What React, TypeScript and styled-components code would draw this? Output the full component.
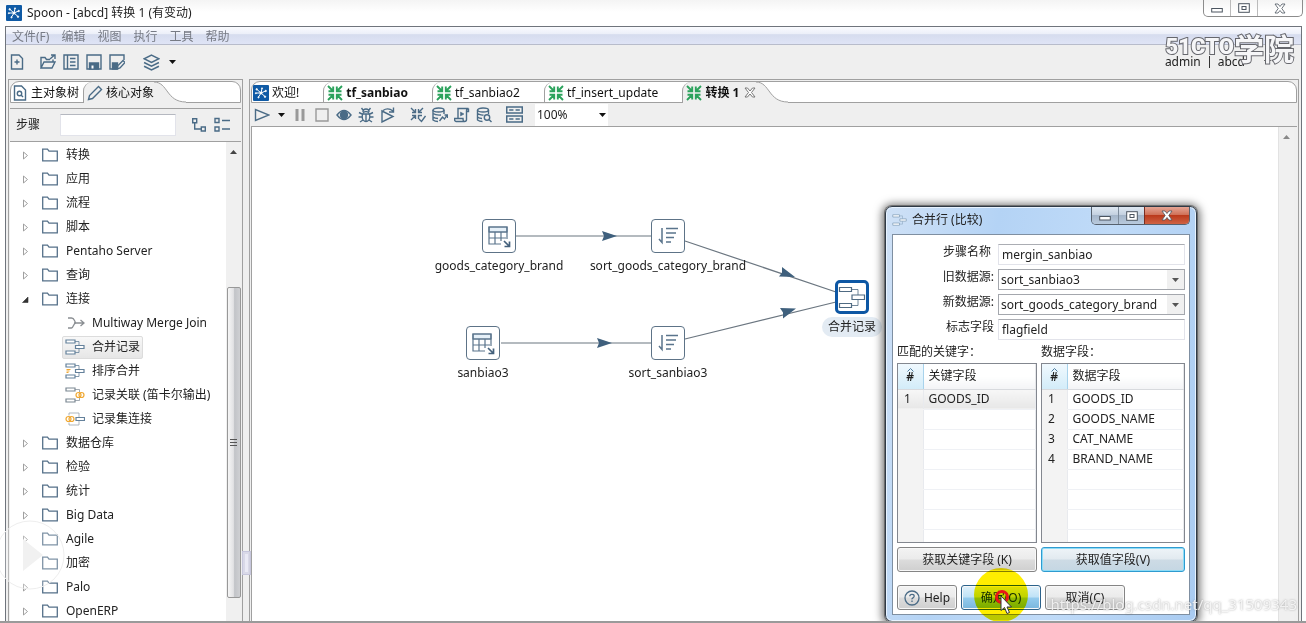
import React from "react";
import styled, { createGlobalStyle, css } from "styled-components";

const ink = "#4a6b86";
const line = "#a0a0a0";
const face = "#efefef";
const fonts = `"Noto Sans", "Noto Sans CJK SC", sans-serif`;

const Global = createGlobalStyle`
  * { box-sizing: border-box; }
  body { margin: 0; font-family: ${fonts}; font-size: 12px; line-height: 16px; color: #222; }
  button, input, select { font: inherit; color: inherit; margin: 0; }
  button { border: 0; padding: 0; background: none; }
`;

/* ---------- window frame ---------- */
const Page = styled.div`
  position: relative;
  display: flex;
  flex-direction: column;
  height: 100vh;
  min-height: 420px;
  overflow: hidden;
  background: linear-gradient(#f4f4f4, #fff 12px);
  border-bottom: 2px solid #9a9a9a;
`;
const TitleBar = styled.header`
  display: flex;
  justify-content: space-between;
  height: 26px;
  padding: 0 3px 0 6px;
`;
const Title = styled.h1`
  display: flex;
  align-items: center;
  gap: 5px;
  margin: 0;
  font-size: 12px;
  font-weight: 400;
`;
const WindowButtons = styled.div`
  display: flex;
  height: 17px;
  border: 1px solid #8c8c8c;
  border-top: 0;
  border-radius: 0 0 5px 5px;
`;
const WindowButton = styled.button<{ $w: number }>`
  display: flex;
  align-items: center;
  justify-content: center;
  width: ${(p) => p.$w}px;
  & + & { border-left: 1px solid #bbb; }
`;
const Frame = styled.div`
  flex: 1;
  min-height: 0;
  display: flex;
  flex-direction: column;
  margin: 0 4px 0 5px;
  border: 1px solid #6f747c;
  border-bottom: 0;
  background: ${face};
`;
const MenuBar = styled.nav`
  display: flex;
  gap: 12px;
  height: 18px;
  padding: 2px 0 0 6px;
  background: linear-gradient(#fafbfe, #eceff9 40%, #d6dcee 45%, #dfe4f6);
  border-bottom: 1px solid #b8bccb;
  color: #777b85;
`;
const ToolBar = styled.div`
  display: flex;
  align-items: center;
  height: 34px;
  padding-right: 30px;
`;
const Tool = styled.button<{ $w?: number; $gap?: number }>`
  display: flex;
  align-items: center;
  justify-content: center;
  width: ${(p) => p.$w ?? 23}px;
  height: 22px;
  margin-left: ${(p) => p.$gap ?? 0}px;
  color: ${ink};
`;
const Account = styled.button`
  display: flex;
  align-items: center;
  gap: 8px;
  margin-left: auto;
  color: #222;
`;
const Repository = styled.span`
  padding-right: 11px;
`;
const Rule = styled.span`
  width: 1px;
  height: 12px;
  background: #333;
`;
const Body = styled.main`
  flex: 1;
  min-height: 0;
  display: grid;
  grid-template-columns: 235px 1fr;
  gap: 6px;
  padding: 0 2px;
`;
const Panel = styled.section`
  min-width: 0;
  min-height: 0;
  display: flex;
  flex-direction: column;
  border: 1px solid ${line};
  border-bottom: 0;
  padding: 1px 1px 0;
`;
const TabStrip = styled.div`
  display: flex;
  height: 22px;
  background: #fff;
  border: 1px solid ${line};
  border-radius: 9px 9px 0 0;
`;
const Tab = styled.button<{ $active?: boolean; $bold?: boolean; $end?: number; $first?: boolean }>`
  display: flex;
  align-items: center;
  gap: 3px;
  height: 21px;
  padding: 0 ${(p) => p.$end ?? 24}px 0 ${(p) => (p.$first ? 1 : 3)}px;
  white-space: nowrap;
  font-weight: ${(p) => (p.$bold ? 700 : 400)};
  color: #111;
  border-left: ${(p) => (p.$first ? 0 : 1)}px solid ${line};
  border-top-left-radius: 9px;
  ${(p) => p.$active && css`background: ${face};`}
`;
const TabSlope = styled.svg`
  flex: none;
  width: 32px;
  height: 21px;
`;
const SearchRow = styled.div`
  display: flex;
  align-items: center;
  height: 34px;
  margin-top: 5px;
  padding: 0 8px 0 6px;
  border-top: 1px solid ${line};
  border-bottom: 1px solid ${line};
`;
const SearchBox = styled.input`
  width: 116px;
  height: 22px;
  margin: 0 auto 0 20px;
  border: 1px solid #e2e3ea;
  border-top-color: #b5b8c0;
  background: #fff;
`;
const TreeArea = styled.div`
  flex: 1;
  min-height: 0;
  display: flex;
  background: #fff;
  overflow: hidden;
`;
const Tree = styled.ul`
  flex: 1;
  margin: 0;
  padding: 1px 0 0;
  list-style: none;
`;
const TreeRow = styled.li<{ $child?: boolean }>`
  display: flex;
  align-items: center;
  gap: ${(p) => (p.$child ? 0 : 12)}px;
  height: 24px;
  padding-left: ${(p) => (p.$child ? 52 : 10)}px;
`;
const Leaf = styled.span<{ $selected?: boolean }>`
  display: flex;
  align-items: center;
  gap: 7px;
  height: 23px;
  padding: 0 2px;
  white-space: nowrap;
  border: 1px solid ${(p) => (p.$selected ? "#dcdcdc" : "transparent")};
  border-radius: 2px;
  ${(p) => p.$selected && css`background: linear-gradient(#f8f8f8, #e6e6e6);`}
`;
const FolderLabel = styled.span`
  display: flex;
  align-items: center;
  gap: 8px;
`;
const ScrollTrack = styled.div`
  display: flex;
  flex-direction: column;
  align-items: center;
  width: 15px;
  background: #f0f0f0;
`;
const ScrollUp = styled.span`
  display: flex;
  align-items: center;
  justify-content: center;
  height: 19px;
`;
const ScrollThumb = styled.div`
  display: flex;
  align-items: center;
  justify-content: center;
  width: 14px;
  height: 65%;
  margin-top: 126px;
  border: 1px solid #989898;
  border-radius: 2px;
  background: linear-gradient(90deg, #f6f6f6, #e2e2e4 45%, #c2c4c8 55%, #cfd0d3);
`;

/* ---------- editor ---------- */
const RunBar = styled.div`
  display: flex;
  align-items: center;
  height: 24px;
  border-bottom: 1px solid ${line};
`;
const ZoomBox = styled.label`
  position: relative;
  display: flex;
  align-items: center;
  width: 73px;
  height: 22px;
  margin-left: 10px;
  background: #fff;
  svg { position: absolute; right: 2px; pointer-events: none; }
`;
const ZoomSelect = styled.select`
  appearance: none;
  width: 100%;
  height: 100%;
  border: 0;
  padding: 0 2px;
  background: transparent;
`;
const CanvasArea = styled.div`
  flex: 1;
  min-height: 0;
  display: flex;
  padding-right: 3px;
`;
const Canvas = styled.div`
  position: relative;
  flex: 1;
  overflow: hidden;
  background: #fff;
  border-left: 1px solid ${line};
`;
const CanvasScroll = styled.div`
  width: 16px;
  border-left: 1px solid #e2e2e2;
  background: #f0f0f0;
  text-align: center;
`;
const Hops = styled.svg`
  position: absolute;
  left: 0;
  top: 0;
  width: 640px;
  height: 300px;
`;
const Node = styled.div<{ $x: number; $y: number }>`
  position: absolute;
  left: ${(p) => p.$x}px;
  top: ${(p) => p.$y}px;
  width: 160px;
  margin-left: -80px;
  display: flex;
  flex-direction: column;
  align-items: center;
  gap: 3px;
`;
const NodeBox = styled.div<{ $selected?: boolean }>`
  display: flex;
  align-items: center;
  justify-content: center;
  width: 34px;
  height: 34px;
  background: #fff;
  border: ${(p) => (p.$selected ? "3px solid #0d57a4" : "1px solid #5d7387")};
  border-radius: ${(p) => (p.$selected ? 5 : 4)}px;
`;
const NodeLabel = styled.span<{ $selected?: boolean }>`
  padding: 2px 6px;
  border-radius: 12px;
  white-space: nowrap;
  background: ${(p) => (p.$selected ? "#e3ebf3" : "transparent")};
`;

/* ---------- dialog ---------- */
const Dialog = styled.section`
  position: absolute;
  right: 109px;
  top: 206px;
  width: 312px;
  padding: 0 6px 6px;
  border: 1px solid #2f3a46;
  border-radius: 7px;
  background: linear-gradient(100deg, #cfe1f6, #b4d3f5 30%, #c0dbf8 60%, #a9cbf1);
  box-shadow: 0 0 0 1px rgba(60, 60, 60, 0.5), inset 0 0 0 1px #e8f3ff, 0 1px 8px 3px rgba(0, 0, 0, 0.55);
`;
const DialogTitle = styled.header`
  display: flex;
  align-items: flex-start;
  height: 27px;
`;
const DialogName = styled.h2`
  display: flex;
  align-items: center;
  gap: 5px;
  flex: 1;
  height: 26px;
  margin: 0;
  font-size: 12px;
  font-weight: 400;
`;
const DialogButtons = styled.div`
  display: flex;
  height: 18px;
  border: 1px solid #56616e;
  border-top: 0;
  border-radius: 0 0 5px 5px;
  overflow: hidden;
`;
const CaptionButton = styled.button<{ $close?: boolean }>`
  display: flex;
  align-items: center;
  justify-content: center;
  width: ${(p) => (p.$close ? 45 : 26)}px;
  border-left: 1px solid ${(p) => (p.$close ? "#7a2d20" : "#7d8b9b")};
  &:first-child { border-left: 0; }
  background: ${(p) =>
    p.$close
      ? "linear-gradient(#e5a595, #d07259 45%, #bb3a1c 50%, #cf6344)"
      : "linear-gradient(#dfe8f2, #c4d1e0 45%, #a5b6ca 50%, #b9cadd)"};
`;
const DialogBody = styled.form`
  padding: 9px 4px 4px;
  background: #fff;
  border: 1px solid #7f8fa1;
`;
const Fields = styled.div`
  display: grid;
  grid-template-columns: 97px 1fr;
  grid-auto-rows: 21px;
  gap: 4px;
`;
const FieldLabel = styled.label<{ $tight?: boolean }>`
  text-align: right;
  padding-right: ${(p) => (p.$tight ? 0 : 3)}px;
  white-space: nowrap;
`;
const TextField = styled.input`
  width: 100%;
  height: 21px;
  padding: 0 3px;
  border: 1px solid #e2e3ea;
  border-top-color: #abadb3;
  background: #fff;
`;
const PickWrap = styled.div`
  display: flex;
  position: relative;
  svg { position: absolute; right: 1px; top: 1px; pointer-events: none; }
`;
const Pick = styled.select`
  appearance: none;
  width: 100%;
  height: 21px;
  padding: 0 2px;
  border: 1px solid #a4a7ad;
  border-radius: 0;
  background: #fff;
`;
const Columns = styled.div<{ $top?: number }>`
  display: grid;
  grid-template-columns: 140px 1fr;
  column-gap: 4px;
  margin-top: ${(p) => p.$top ?? 0}px;
`;
const Caption = styled.h3`
  height: 23px;
  margin: 0;
  padding-top: 4px;
  font-size: 12px;
  font-weight: 400;
`;
const GridBox = styled.div`
  height: 180px;
  overflow: hidden;
  border: 1px solid #83878f;
`;
const Grid = styled.table`
  width: 100%;
  border-collapse: collapse;
  table-layout: fixed;
`;
const HeadCell = styled.th<{ $index?: boolean }>`
  height: 25px;
  width: ${(p) => (p.$index ? "25px" : "auto")};
  padding: 0 0 0 ${(p) => (p.$index ? 0 : 5)}px;
  text-align: ${(p) => (p.$index ? "center" : "left")};
  font-weight: ${(p) => (p.$index ? 600 : 400)};
  background: ${(p) => (p.$index ? "linear-gradient(#f0f9fe, #d3ecf9)" : "linear-gradient(#fff 50%, #f3f4f6)")};
  border-right: 1px solid ${(p) => (p.$index ? "#a8d3ec" : "#e6e7ea")};
  border-bottom: 1px solid #d8dade;
`;
const SortMark = styled.svg`
  display: block;
  margin: 0 auto -3px;
`;
const Cell = styled.td<{ $index?: boolean; $on?: boolean }>`
  height: 20px;
  padding: 0 0 0 ${(p) => (p.$index ? 6 : 5)}px;
  white-space: nowrap;
  border-bottom: 1px solid ${(p) => (p.$index ? "#f3f3f3" : "#eff1f5")};
  border-right: 1px solid #e8eaee;
  background: ${(p) => (p.$on ? "linear-gradient(#f7f7f7, #e7e7e7)" : p.$index ? "#f3f3f3" : "#fff")};
`;
const PushButton = styled.button<{ $tone?: "focus" | "default"; $w?: number }>`
  display: flex;
  align-items: center;
  justify-content: center;
  gap: 4px;
  width: ${(p) => (p.$w ? `${p.$w}px` : "100%")};
  height: 25px;
  color: ${(p) => (p.$tone === "default" ? "#14307c" : "#222")};
  border: 1px solid ${(p) => (p.$tone === "focus" ? "#2f9bd0" : p.$tone === "default" ? "#2c628b" : "#858585")};
  border-radius: 3px;
  box-shadow: inset 0 0 0 1px ${(p) => (p.$tone === "focus" ? "#8ddcf7" : "#f8f8f8")};
  background: ${(p) =>
    p.$tone === "focus"
      ? "linear-gradient(#eef4f8, #e2eaf0 48%, #cddbe5 52%, #c5d7e3)"
      : p.$tone === "default"
      ? "linear-gradient(#dff1fb, #bfe2f6 48%, #93cbee 52%, #79b6dc)"
      : "linear-gradient(#f3f3f3, #ebebeb 48%, #dcdcdc 52%, #cfcfcf)"};
`;
const PushRow = styled.div`
  display: flex;
  gap: 4px;
  margin-top: 13px;
`;

/* ---------- overlays ---------- */
const Brand = styled.div`
  position: absolute;
  right: 12px;
  top: 32px;
  display: flex;
  align-items: center;
  height: 30px;
  font: 900 22px/30px Roboto, "Noto Sans CJK SC", sans-serif;
  color: #f6f6f8;
  -webkit-text-stroke: 2px #66676d;
  paint-order: stroke fill;
`;
const BrandCjk = styled.span`
  font: 700 30px/30px "Noto Sans CJK SC", sans-serif;
`;
const SourceLink = styled.a`
  position: absolute;
  right: 9px;
  bottom: 7px;
  font-size: 15px;
  line-height: 20px;
  color: rgba(255, 255, 255, 0.8);
  text-shadow: 0 0 2px rgba(120, 120, 120, 0.7);
  text-decoration: none;
`;
const Highlight = styled.div`
  position: absolute;
  right: 278px;
  top: 568px;
  width: 54px;
  height: 54px;
  border-radius: 50%;
  background: #ffee00;
  mix-blend-mode: multiply;
`;
const Pointer = styled.svg`
  position: absolute;
  right: 291px;
  top: 588px;
`;
const PlayMark = styled.svg`
  position: absolute;
  left: -6px;
  top: 519px;
`;
const Sash = styled.div`
  position: absolute;
  left: 242px;
  top: 551px;
  width: 9px;
  height: 24px;
  border: 1px solid #c6c6dc;
  background: rgba(232, 232, 246, 0.8);
  box-shadow: inset 0 0 0 2px rgba(200, 200, 220, 0.5);
`;

/* ---------- drawings ---------- */
const Ico = ({ size = 16, children }: { size?: number; children: React.ReactNode }) => (
  <svg width={size} height={size} viewBox="0 0 16 16" fill="none" stroke={ink} strokeWidth="1.4">
    {children}
  </svg>
);
const Caret = () => (
  <svg width="7" height="4" viewBox="0 0 7 4">
    <path d="M0 0h7L3.5 4z" fill="#111" />
  </svg>
);
const SpoonLogo = () => (
  <svg width="16" height="16" viewBox="0 0 16 16">
    <rect width="16" height="16" rx="1" fill="#0f5aa5" />
    <g stroke="#fff" strokeWidth="1" fill="#fff">
      <path d="M8 8 4 4.500M8 8l1-4.500M8 8l4.500-2M8 8l4 3.500M8 8l-2.500 4M8 8H3" />
      <circle cx="3.700" cy="4.300" r=".7" /><circle cx="9" cy="3.300" r=".5" /><circle cx="12.700" cy="6" r=".7" />
      <circle cx="12" cy="11.700" r=".7" /><circle cx="5.500" cy="12.300" r=".6" /><circle cx="2.800" cy="8.200" r=".5" />
      <circle cx="8" cy="8" r="1" />
    </g>
  </svg>
);
const TransIcon = () => (
  <svg width="16" height="16" viewBox="0 0 16 16" fill="none" stroke="#2ba25c" strokeWidth="1.900">
    <path d="M1 1l5 5M1.500 6.200h4.700V1.500M15 1l-5 5M14.500 6.200H9.800V1.500M1 15l5-5M1.500 9.800h4.700V14.500M15 15l-5-5M14.500 9.800H9.800V14.500" />
  </svg>
);
const Folder = () => (
  <svg width="16" height="14" viewBox="0 0 16 14" fill="none" stroke="#557089" strokeWidth="1.300">
    <path d="M.7 12.800V1.200h4.800l1.500 2h8.300v9.600z" />
  </svg>
);
const MergeGlyph = ({ size = 20, color = "#64819b" }: { size?: number; color?: string }) => (
  <svg width={size} height={(size * 16) / 20} viewBox="0 0 20 16" fill="none" stroke={color} strokeWidth="1.200">
    <path d="M1 1h9v3H1zM1 12h9v3H1zM10.500 6.500h8.500v3h-8.500z" fill="#fff" />
    <path d="M10 2.500h4v4M10 13.500h4v-4" strokeWidth=".8" />
  </svg>
);
const MergeNodeGlyph = () => (
  <svg width="28" height="26" viewBox="0 0 28 26" fill="none" stroke="#4f6a82" strokeWidth="1.200">
    <path d="M1.500 3.500h12v4h-12zM1.500 19.500h12v4h-12zM14 11h12.500v4.500H14z" />
    <path d="M13.500 5.500H20V11M13.500 21.500H20v-6" strokeWidth=".8" />
  </svg>
);
const MultiwayGlyph = () => (
  <svg width="20" height="16" viewBox="0 0 20 16" fill="none" stroke="#8b8f93" strokeWidth="1.300">
    <path d="M3 3h3.500q2 0 3 2.500T11 8q-1.500 0-2.500 2.500T6.500 13H3M9 8h10M15.500 5l3.500 3-3.500 3" />
  </svg>
);
const SortedMergeGlyph = () => (
  <svg width="20" height="16" viewBox="0 0 20 16" fill="none" stroke="#64819b" strokeWidth="1.200">
    <path d="M1 1h9v3H1zM1 12h9v3H1zM10.500 6.500h8.500v3h-8.500z" />
    <path d="M10 2.500h4v4M10 13.500h4v-4" strokeWidth=".8" />
    <path d="M1.500 6.500h4M1.500 8h3M1.500 9.500h2" stroke="#f0a832" />
  </svg>
);
const CartesianGlyph = () => (
  <svg width="20" height="16" viewBox="0 0 20 16" fill="none" stroke="#7b8792" strokeWidth="1.200">
    <path d="M1 1h9v3H1zM1 12h9v3H1z" />
    <path d="M10 2.500h4.500V5M10 13.500h4.500V11" strokeWidth=".7" />
    <g stroke="#f0a832"><circle cx="13.500" cy="8" r="2.500" /><circle cx="16.500" cy="8" r="2.500" /></g>
  </svg>
);
const RecordSetGlyph = () => (
  <svg width="20" height="16" viewBox="0 0 20 16" fill="none" stroke="#64819b" strokeWidth="1.200">
    <path d="M4 4.500V2h10v4M4 11.500V14h10v-4" strokeWidth=".8" stroke="#9aa5ae" />
    <path d="M11 6.500h8.500v3H11z" />
    <g stroke="#f0a832"><circle cx="3.500" cy="8" r="2.500" /><circle cx="6.500" cy="8" r="2.500" /></g>
  </svg>
);
const TableInput = () => (
  <svg width="26" height="26" viewBox="0 0 26 26" fill="none" stroke="#5a748c" strokeWidth="1.200">
    <path d="M3 4h18v5H3z" fill="#e6f0f8" />
    <path d="M21 16V4H3v17h12M3 9h18M3 15h17M9 9v12M15 9v9" />
    <path d="M18 18l5 5M23.500 18.500V23.500H18.500" strokeWidth="1.700" stroke="#44617c" />
  </svg>
);
const SortRows = () => (
  <svg width="26" height="26" viewBox="0 0 26 26" fill="none" stroke="#5a748c" strokeWidth="1.500">
    <path d="M7 5v14M4 16l3 3.500V14" />
    <path d="M11 5.500h12M11 10h10M11 14.500h8M11 19h5" />
  </svg>
);
const Minimize = () => (
  <svg width="12" height="10" viewBox="0 0 12 10"><rect x=".7" y="5.500" width="10.600" height="3.500" fill="#fff" stroke="#4c5560" /></svg>
);
const Maximize = () => (
  <svg width="12" height="10" viewBox="0 0 12 10" fill="#fff" stroke="#4c5560"><rect x=".7" y=".7" width="10.600" height="8.600" /><rect x="4" y="3.500" width="4" height="3" /></svg>
);
const CloseX = () => (
  <svg width="12" height="11" viewBox="0 0 12 11"><path d="M1 1h3l2 2.500L8 1h3L7.800 5.500 11 10H8L6 7.500 4 10H1l3.200-4.500z" fill="#fff" stroke="#4c5560" strokeWidth=".8" /></svg>
);
const PickArrow = () => (
  <svg width="17" height="19" viewBox="0 0 17 19"><path d="M0 0h17v19H0z" fill="#f0f0f0" /><path d="M5 8h7l-3.500 4z" fill="#555" /></svg>
);

/* ---------- data ---------- */
type Item = { name: string; open?: boolean; children?: { name: string; icon: React.ReactNode; selected?: boolean }[] };
const items: Item[] = [
  { name: "转换" }, { name: "应用" }, { name: "流程" }, { name: "脚本" }, { name: "Pentaho Server" }, { name: "查询" },
  {
    name: "连接",
    open: true,
    children: [
      { name: "Multiway Merge Join", icon: <MultiwayGlyph /> },
      { name: "合并记录", icon: <MergeGlyph />, selected: true },
      { name: "排序合并", icon: <SortedMergeGlyph /> },
      { name: "记录关联 (笛卡尔输出)", icon: <CartesianGlyph /> },
      { name: "记录集连接", icon: <RecordSetGlyph /> },
    ],
  },
  { name: "数据仓库" }, { name: "检验" }, { name: "统计" }, { name: "Big Data" }, { name: "Agile" }, { name: "加密" }, { name: "Palo" }, { name: "OpenERP" },
];
const menus = ["文件(F)", "编辑", "视图", "执行", "工具", "帮助"];

const DataGrid = ({ head, rows, active }: { head: string; rows: string[]; active?: number }) => (
  <GridBox>
    <Grid>
      <thead>
        <tr>
          <HeadCell $index>
            <SortMark width="7" height="4" viewBox="0 0 7 4"><path d="M.5 3.500l3-3 3 3" fill="none" stroke="#4f7da0" /></SortMark>
            #
          </HeadCell>
          <HeadCell>{head}</HeadCell>
        </tr>
      </thead>
      <tbody>
        {Array.from({ length: 8 }, (_, i) => (
          <tr key={i}>
            <Cell $index $on={active === i}>{rows[i] ? i + 1 : ""}</Cell>
            <Cell $on={active === i}>{rows[i] ?? ""}</Cell>
          </tr>
        ))}
      </tbody>
    </Grid>
  </GridBox>
);

const MergeDialog = () => (
  <Dialog role="dialog" aria-labelledby="dlg-name">
    <DialogTitle>
      <DialogName id="dlg-name"><MergeGlyph size={15} color="#8fa9c2" />合并行 (比较)</DialogName>
      <DialogButtons>
        <CaptionButton aria-label="最小化"><Minimize /></CaptionButton>
        <CaptionButton aria-label="最大化"><Maximize /></CaptionButton>
        <CaptionButton $close aria-label="关闭"><CloseX /></CaptionButton>
      </DialogButtons>
    </DialogTitle>
    <DialogBody onSubmit={(e) => e.preventDefault()}>
      <Fields>
        <FieldLabel htmlFor="step">步骤名称</FieldLabel>
        <TextField id="step" defaultValue="mergin_sanbiao" />
        <FieldLabel $tight htmlFor="old">旧数据源:</FieldLabel>
        <PickWrap><Pick id="old"><option>sort_sanbiao3</option></Pick><PickArrow /></PickWrap>
        <FieldLabel $tight htmlFor="new">新数据源:</FieldLabel>
        <PickWrap><Pick id="new"><option>sort_goods_category_brand</option></Pick><PickArrow /></PickWrap>
        <FieldLabel $tight htmlFor="flag">标志字段</FieldLabel>
        <TextField id="flag" defaultValue="flagfield" />
      </Fields>
      <Columns>
        <Caption>匹配的关键字：</Caption>
        <Caption>数据字段：</Caption>
        <DataGrid head="关键字段" rows={["GOODS_ID"]} active={0} />
        <DataGrid head="数据字段" rows={["GOODS_ID", "GOODS_NAME", "CAT_NAME", "BRAND_NAME"]} />
      </Columns>
      <Columns $top={4}>
        <PushButton type="button">获取关键字段 (K)</PushButton>
        <PushButton type="button" $tone="focus">获取值字段(V)</PushButton>
      </Columns>
      <PushRow>
        <PushButton type="button" $w={60}>
          <svg width="16" height="16" viewBox="0 0 16 16" fill="none" stroke={ink} strokeWidth="1.300">
            <circle cx="8" cy="8" r="7" /><path d="M5.800 6.300q0-2 2.200-2t2.200 1.800q0 1.100-1.200 1.700T8 9.400M8 10.600v1.400" />
          </svg>
          Help
        </PushButton>
        <PushButton type="submit" $tone="default" $w={80}>确定(O)</PushButton>
        <PushButton type="button" $w={80}>取消(C)</PushButton>
      </PushRow>
    </DialogBody>
  </Dialog>
);

const Sidebar = () => (
  <Panel>
    <TabStrip role="tablist">
      <Tab role="tab" $first $end={4}>
        <Ico><path d="M2.500 1h7l4 4v10h-11z" /><circle cx="7.500" cy="8.500" r="2.200" /><path d="M9 10l2 2" /></Ico>
        主对象树
      </Tab>
      <Tab role="tab" $active $end={0} aria-selected>
        <Ico><path d="M1.500 14.500l1-4L11.500 1.500l3 3L5.500 13.500z" /></Ico>
        核心对象
      </Tab>
      <TabSlope viewBox="0 0 32 21"><path d="M0 0C14 0 12 20 32 20V21H0z" fill={face} /><path d="M0 0C14 0 12 20 32 20" fill="none" stroke={line} /></TabSlope>
    </TabStrip>
    <SearchRow>
      <label htmlFor="find">步骤</label>
      <SearchBox id="find" />
      <Tool aria-label="展开"><Ico><path d="M1.700 1.700h4v4h-4zM10.300 10h4v4h-4zM3.700 6v6h6" /></Ico></Tool>
      <Tool aria-label="折叠"><Ico><path d="M1 1.500h4v4H1zM1 10h4v4H1zM8 3.500h8M8 12h8" /></Ico></Tool>
    </SearchRow>
    <TreeArea>
      <Tree>
        {items.map((it) => (
          <React.Fragment key={it.name}>
            <TreeRow>
              <svg width="10" height="9" viewBox="0 0 10 9">
                {it.open ? <path d="M8 2v5.500H2.500z" fill="#333" stroke="#333" strokeWidth=".6" /> : <path d="M3.500 1l4 3.500-4 3.500z" fill="#fff" stroke="#a0a0a0" />}
              </svg>
              <FolderLabel><Folder />{it.name}</FolderLabel>
            </TreeRow>
            {it.children?.map((c) => (
              <TreeRow key={c.name} $child><Leaf $selected={c.selected}>{c.icon}{c.name}</Leaf></TreeRow>
            ))}
          </React.Fragment>
        ))}
      </Tree>
      <ScrollTrack>
        <ScrollUp><svg width="7" height="4" viewBox="0 0 7 4"><path d="M0 4h7L3.500 0z" fill="#444" /></svg></ScrollUp>
        <ScrollThumb><svg width="7" height="8" viewBox="0 0 7 8"><path d="M0 .5h7M0 3.500h7M0 6.500h7" stroke="#555" /></svg></ScrollThumb>
      </ScrollTrack>
    </TreeArea>
  </Panel>
);

const Editor = () => (
  <Panel>
    <TabStrip role="tablist">
      <Tab role="tab" $first><SpoonLogo />欢迎!</Tab>
      <Tab role="tab" $bold><TransIcon />tf_sanbiao</Tab>
      <Tab role="tab"><TransIcon />tf_sanbiao2</Tab>
      <Tab role="tab"><TransIcon />tf_insert_update</Tab>
      <Tab role="tab" $active $bold $end={0} aria-selected>
        <TransIcon />转换 1
        <svg width="14" height="11" viewBox="-2 0 14 11"><path d="M1 1h2.500L6 4l2.500-3H11L7.500 5.500 11 10H8.500L6 7l-2.500 3H1l3.500-4.500z" fill="#fff" stroke="#777" /></svg>
      </Tab>
      <TabSlope viewBox="0 0 32 21"><path d="M0 0C14 0 12 20 32 20V21H0z" fill={face} /><path d="M0 0C14 0 12 20 32 20" fill="none" stroke={line} /></TabSlope>
    </TabStrip>
    <RunBar>
      <Tool $w={22} aria-label="运行"><Ico><path d="M1.500 2.500v11L15 8z" /></Ico></Tool>
      <Tool $w={16} aria-label="运行选项"><Caret /></Tool>
      <Tool $w={22} aria-label="暂停"><Ico><path d="M5 2v12M11 2v12" stroke="#999" strokeWidth="3" /></Ico></Tool>
      <Tool $w={22} aria-label="停止"><Ico><path d="M2 2h12v12H2z" stroke="#999" /></Ico></Tool>
      <Tool $w={22} aria-label="预览"><Ico><path d="M1 8q7-9 14 0-7 9-14 0z" /><circle cx="8" cy="8" r="3.500" fill={ink} /></Ico></Tool>
      <Tool $w={22} aria-label="调试"><Ico><ellipse cx="8" cy="9.500" rx="3.800" ry="5" /><path d="M5 5q0-3 3-3t3 3M4.500 7h7M8 7v7M5 3L3.500 1M11 3l1.500-2M4 7L1 5.500M12 7l3-1.500M4 10H.5M12 10h3.500M5 13l-3 2M11 13l3 2" /></Ico></Tool>
      <Tool $w={22} aria-label="重放"><Ico><path d="M2 4v11l11-5.500zM3 3.500Q8 0 13 4M13.500 .5V5H9" /></Ico></Tool>
      <Tool $w={22} $gap={8} aria-label="校验"><Ico><path d="M1 1l4 4M2 5.500h3.500V2M13 1L9 5M12 5.500H8.500V2M1 13l4-4M2 8.500h3.500V12M8.500 12V8.500H12M9 12l2.500 2.500L15.500 9" /></Ico></Tool>
      <Tool $w={22} aria-label="影响"><Ico><ellipse cx="6.500" cy="3" rx="5.500" ry="2" /><path d="M1 3v10q2 1.500 5 1.500M12 3v4M1 6.500q3 2 8 1.500M1 10q2 1.500 5 1.500M7.500 14l3-4 2 2 2.500-4M12.500 8H15.500V11" /></Ico></Tool>
      <Tool $w={22} aria-label="SQL"><Ico><path d="M4 11V1.500h10.500q-2 0-2 2.500v8.500q0 2-2 2H2q-1.500 0-1.500-3H9q0 3 1.500 3M14.500 1.500V4.500h-2" /><path d="M6.500 5v4L10 7z" fill={ink} strokeWidth=".5" /></Ico></Tool>
      <Tool $w={22} aria-label="数据库"><Ico><ellipse cx="7" cy="3" rx="5.500" ry="2" /><path d="M1.500 3v10q2 1.500 5 1.500M12.500 3v4M1.500 6.500q3 2 6 1.500M1.500 10q2 1.500 4.500 1.500" /><circle cx="11" cy="10.500" r="2.700" /><path d="M13 12.500l2.500 2.500" /></Ico></Tool>
      <Tool $w={22} $gap={8} aria-label="结果"><Ico size={17}><path d="M.7 1h14.600v5.500H.7zM.7 9.500h14.600V15H.7z" /><path d="M3 3.700h4M9 3.700h4M3 12.300h4M9 12.300h4" /></Ico></Tool>
      <ZoomBox><ZoomSelect aria-label="缩放"><option>100%</option></ZoomSelect><Caret /></ZoomBox>
    </RunBar>
    <CanvasArea>
      <Canvas>
        <Hops viewBox="0 0 640 300" stroke="#6b7680" fill="#3f607d">
          <path d="M264 109H400M249 216H400M433 114L584 165M433 212L584 175" strokeWidth="1.200" fill="none" />
          <g stroke="none">
            <path d="M350 104l15 5-15 5 2-5z" /><path d="M345 211l15 5-15 5 2-5z" />
            <path d="M530 140l13 10-16-.5 3-4z" /><path d="M528 181l16 0.500-13 10 0-6z" />
          </g>
        </Hops>
        <Node $x={247} $y={92}><NodeBox><TableInput /></NodeBox><NodeLabel>goods_category_brand</NodeLabel></Node>
        <Node $x={416} $y={92}><NodeBox><SortRows /></NodeBox><NodeLabel>sort_goods_category_brand</NodeLabel></Node>
        <Node $x={231} $y={199}><NodeBox><TableInput /></NodeBox><NodeLabel>sanbiao3</NodeLabel></Node>
        <Node $x={416} $y={199}><NodeBox><SortRows /></NodeBox><NodeLabel>sort_sanbiao3</NodeLabel></Node>
        <Node $x={600} $y={153}><NodeBox $selected><MergeNodeGlyph /></NodeBox><NodeLabel $selected>合并记录</NodeLabel></Node>
      </Canvas>
      <CanvasScroll><svg width="7" height="4" viewBox="0 0 7 4"><path d="M0 4h7L3.500 0z" fill="#888" /></svg></CanvasScroll>
    </CanvasArea>
  </Panel>
);

export default function App() {
  return (
    <Page>
      <Global />
      <TitleBar>
        <Title><SpoonLogo />Spoon - [abcd] 转换 1 (有变动)</Title>
        <WindowButtons>
          <WindowButton $w={26} aria-label="最小化"><Minimize /></WindowButton>
          <WindowButton $w={27} aria-label="最大化"><Maximize /></WindowButton>
          <WindowButton $w={45} aria-label="关闭"><CloseX /></WindowButton>
        </WindowButtons>
      </TitleBar>
      <Frame>
        <MenuBar>{menus.map((m) => <button key={m}>{m}</button>)}</MenuBar>
        <ToolBar>
          <Tool $w={22} aria-label="新建"><Ico><path d="M2.500 1h7.500l3.500 3.500V15h-11zM8 5.500v5M5.500 8h5" /></Ico></Tool>
          <Tool $gap={8} aria-label="打开"><Ico><path d="M1 14V3.500h4l1.500 2H10M1 14l3-6h11l-3 6zM13 8V5.500M10 5l4.500-4M11 1h4v4" /></Ico></Tool>
          <Tool aria-label="浏览"><Ico><path d="M1 1h14v14H1zM4.500 1v14M7 4.500h5.500M7 8h5.500M7 11.500h5.500" /></Ico></Tool>
          <Tool aria-label="保存"><Ico><path d="M1 1h14v14H1z" /><path d="M3.500 9h9v6h-9z" fill={ink} /><path d="M5.500 11.500h2v3h-2z" fill="#fff" stroke="none" /></Ico></Tool>
          <Tool aria-label="另存为"><Ico><path d="M7 15H1V1h14v5" /><path d="M3.500 9h5v6h-5z" fill={ink} /><path d="M8 15l1-3.500L14 6.500l2 2L11 14z" fill={face} /></Ico></Tool>
          <Tool $gap={12} aria-label="视图"><Ico size={17}><path d="M8 1l7 3.500L8 8 1 4.500zM1 8l7 3.500L15 8M1 11.500L8 15l7-3.500" /></Ico></Tool>
          <Tool $w={18} aria-label="视图选项"><Caret /></Tool>
          <Account>admin<Rule /><Repository>abcd</Repository><Caret /></Account>
        </ToolBar>
        <Body><Sidebar /><Editor /></Body>
      </Frame>
      <Brand>51CTO<BrandCjk>学院</BrandCjk></Brand>
      <Sash />
      <PlayMark width="72" height="72" viewBox="0 0 72 72">
        <circle cx="36" cy="36" r="34" fill="rgba(255,255,255,.25)" stroke="#eee" />
        <path d="M29 20v32l20-16z" fill="#f1f1f1" />
      </PlayMark>
      <MergeDialog />
      <Highlight />
      <SourceLink href="https://blog.csdn.net/qq_31509343">https://blog.csdn.net/qq_31509343</SourceLink>
      <Pointer width="22" height="28" viewBox="0 0 22 28">
        <circle cx="9" cy="9" r="5.500" fill="none" stroke="#e81818" strokeWidth="3" />
        <path d="M8 8v14.500l3.500-3 2.500 6 2.500-1-2.500-5.500h4.500z" fill="#fff" stroke="#333" />
      </Pointer>
    </Page>
  );
}
